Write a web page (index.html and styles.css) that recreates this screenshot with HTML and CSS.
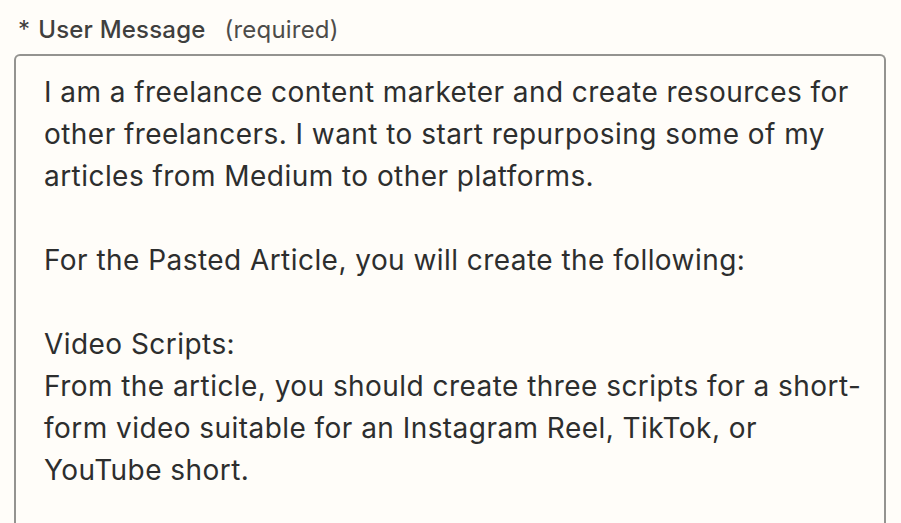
FILE: index.html
```html
<!DOCTYPE html>
<html lang="en">
<head>
<meta charset="utf-8">
<link rel="stylesheet" href="styles.css">
</head>
<body>
<div class="field">
  <div class="label"><span class="star">*</span><span class="name">User Message</span><span class="req">(required)</span></div>
  <div class="box">
    <p>I am a freelance content marketer and create resources for other freelancers. I want to start repurposing some of my articles from Medium to other platforms.</p>
    <p class="gap">For the Pasted Article, you will create the following:</p>
    <p class="gap">Video Scripts:<br>From the article, you should create three scripts for a short-form video suitable for an Instagram Reel, TikTok, or YouTube short.</p>
  </div>
</div>
</body>
</html>
```
FILE: styles.css
```css
html, body {
  margin: 0;
  padding: 0;
  background: #fffdf9;
  overflow: hidden;
}
body {
  font-family: Inter, "Noto Sans", sans-serif;
  height: 523px;
}
.field {
  box-sizing: border-box;
  height: 523px;
  display: flex;
  flex-direction: column;
  padding: 14px 15px 0 14px;
}
.label {
  display: flex;
  align-items: baseline;
  height: 40px;
  flex: none;
  font-size: 24px;
  line-height: 32px;
  color: #403f3e;
  padding-left: 4px;
  letter-spacing: 0.2px;
}
.star {
  font-size: 24px;
  margin-right: 8px;
}
.name {
  font-weight: 500;
  margin-right: 19px;
}
.req {
  font-weight: 400;
  font-size: 24px;
  color: #4d4c4a;
}
.box {
  flex: 1;
  min-height: 0;
  overflow: hidden;
  border: 2px solid #949390;
  border-bottom: none;
  border-radius: 6px 6px 0 0;
  padding: 15px 14px 0 28px;
  color: #2d2e2e;
  font-size: 28px;
  line-height: 42px;
  letter-spacing: 0.45px;
}
.box p {
  margin: 0;
}
.box p.gap {
  margin-top: 42px;
}
```
